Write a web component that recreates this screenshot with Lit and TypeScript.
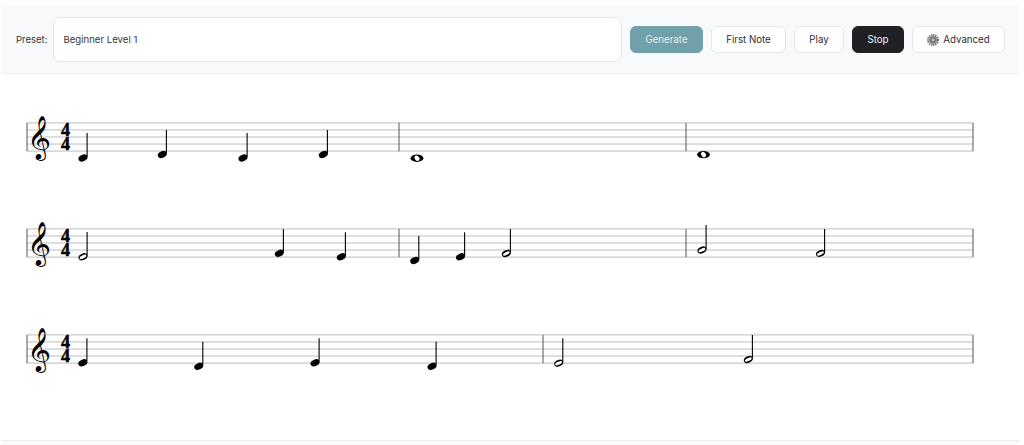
import { LitElement, html, css, svg } from "lit";
import { customElement } from "lit/decorators.js";

// x, head y, kind, stem top y
type N = [number, number, "q" | "h" | "w", number?];
type Staff = { y: number; bars: number[]; notes: N[] };
const staves: Staff[] = [
  { y: 122.9, bars: [399, 686, 973], notes: [[83,158,"q",133],[162.3,154.5,"q",130],[243,158,"q",133],[323.3,154.5,"q",130],[417,158.2,"w"],[703.5,154.6,"w"]] },
  { y: 228.9, bars: [399, 686, 973], notes: [[83,256.8,"h",232],[279.3,253.3,"q",229],[341.3,256.8,"q",232.3],[414.7,260.5,"q",236],[460.5,256.8,"q",232.3],[506.3,253.5,"h",229],[702,250,"h",225],[820.5,253.4,"h",229]] },
  { y: 334.9, bars: [543, 973], notes: [[82.8,362.8,"q",338.3],[198.7,366.3,"q",341.7],[315,362.8,"q",338.3],[432,366.3,"q",341.7],[558.7,363.2,"h",338.3],[748.3,359.5,"h",335]] },
];

function note([x, y, k, top]: N) {
  if (k === "w") {
    return svg`<ellipse cx=${x} cy=${y} rx="6.4" ry="3.7" fill="#000"/><ellipse cx=${x} cy=${y} rx="2.2" ry="2.9" transform="rotate(-35 ${x} ${y})" fill="#fff"/>`;
  }
  const head = svg`<ellipse cx=${x} cy=${y} rx="4.7" ry="3.2" transform="rotate(-24 ${x} ${y})" fill="#000"/>`;
  const hole = k === "h" ? svg`<ellipse cx=${x} cy=${y} rx="3.7" ry="1.5" transform="rotate(-26 ${x} ${y})" fill="#fff"/>` : null;
  const stem = svg`<line x1=${x + 4.1} x2=${x + 4.1} y1=${y - 1} y2=${top} stroke="#000" stroke-width="1.1"/>`;
  return svg`${head}${hole}${stem}`;
}

function staff(s: Staff) {
  const end = s.bars[s.bars.length - 1];
  const lines = [0, 1, 2, 3, 4].map((i) => svg`<line x1="27" x2=${end} y1=${s.y + i * 7.05} y2=${s.y + i * 7.05} stroke="#bdbdbd" stroke-width="1"/>`);
  const bars = [27, ...s.bars].map((x) => svg`<line x1=${x} x2=${x} y1=${s.y} y2=${s.y + 28.2} stroke="#555" stroke-width="1"/>`);
  return svg`<g>${lines}${bars}
    <text class="clef" transform="translate(27 ${s.y + 27}) scale(1.1 1)">𝄞</text>
    <text class="time" x="65.5" y=${s.y + 13}>4</text>
    <text class="time" x="65.5" y=${s.y + 27}>4</text>
    ${s.notes.map(note)}</g>`;
}

@customElement("app-root")
export class AppRoot extends LitElement {
  static styles = css`
    :host { display: block; width: 1024px; height: 445px; background: #fff; overflow: hidden; font-family: Inter, "Liberation Sans", sans-serif; color: #1f2328; box-sizing: border-box; }
    .bar { margin: 5px 5px 0 2px; height: 69px; box-sizing: border-box; background: #f8f9fb; border-bottom: 1px solid #f1f2f5; display: flex; align-items: center; padding: 1px 14px 0; gap: 8px; }
    .label { font-size: 9.5px; margin-right: -2px; color: #33363b; }
    .input { flex: 1; height: 45px; box-sizing: border-box; border: 1px solid #e3e6ee; border-radius: 7px; background: #fff; display: flex; align-items: center; padding: 0 9px; font-size: 9.6px; color: #33363b; }
    .btn { height: 27px; box-sizing: border-box; border: 1px solid #e3e6ee; border-radius: 6px; background: #fff; display: flex; align-items: center; justify-content: center; font-size: 9.7px; color: #2a2d33; gap: 4px; }
    .gen { width: 73px; background: #72a0aa; border-color: #72a0aa; color: #e3eef0; }
    .first { width: 75px; }
    .play { width: 50px; }
    .stop { width: 52px; background: #1f2124; border-color: #1f2124; color: #f3f3f3; }
    .adv { width: 93px; }
    .gear { width: 12px; height: 12px; }
    svg.sheet { display: block; width: 1024px; height: 366px; }
    .clef { font-family: "DejaVu Sans", serif; font-size: 37px; }
    .time { font-family: "Liberation Serif", serif; font-weight: 700; font-size: 18px; text-anchor: middle; stroke: #000; stroke-width: 0.5px; }
    .foot { margin: 0 5px 0 2px; height: 5px; background: #fafafb; border-top: 1px solid #eeeff2; box-sizing: border-box; }
  `;
  render() {
    return html`
      <div class="bar">
        <span class="label">Preset:</span>
        <div class="input">Beginner Level 1</div>
        <div class="btn gen">Generate</div>
        <div class="btn first">First Note</div>
        <div class="btn play">Play</div>
        <div class="btn stop">Stop</div>
        <div class="btn adv"><svg class="gear" viewBox="0 0 24 24"><circle cx="12" cy="12" r="10" fill="none" stroke="#6a6a6a" stroke-width="4" stroke-dasharray="2.6 1.6"/><circle cx="12" cy="12" r="8" fill="#858585"/><circle cx="12" cy="12" r="4" fill="#c4c4c4" stroke="#555" stroke-width="1.5"/></svg>Advanced</div>
      </div>
      <svg class="sheet" viewBox="0 74 1024 366">${staves.map(staff)}</svg>
      <div class="foot"></div>
    `;
  }
}
